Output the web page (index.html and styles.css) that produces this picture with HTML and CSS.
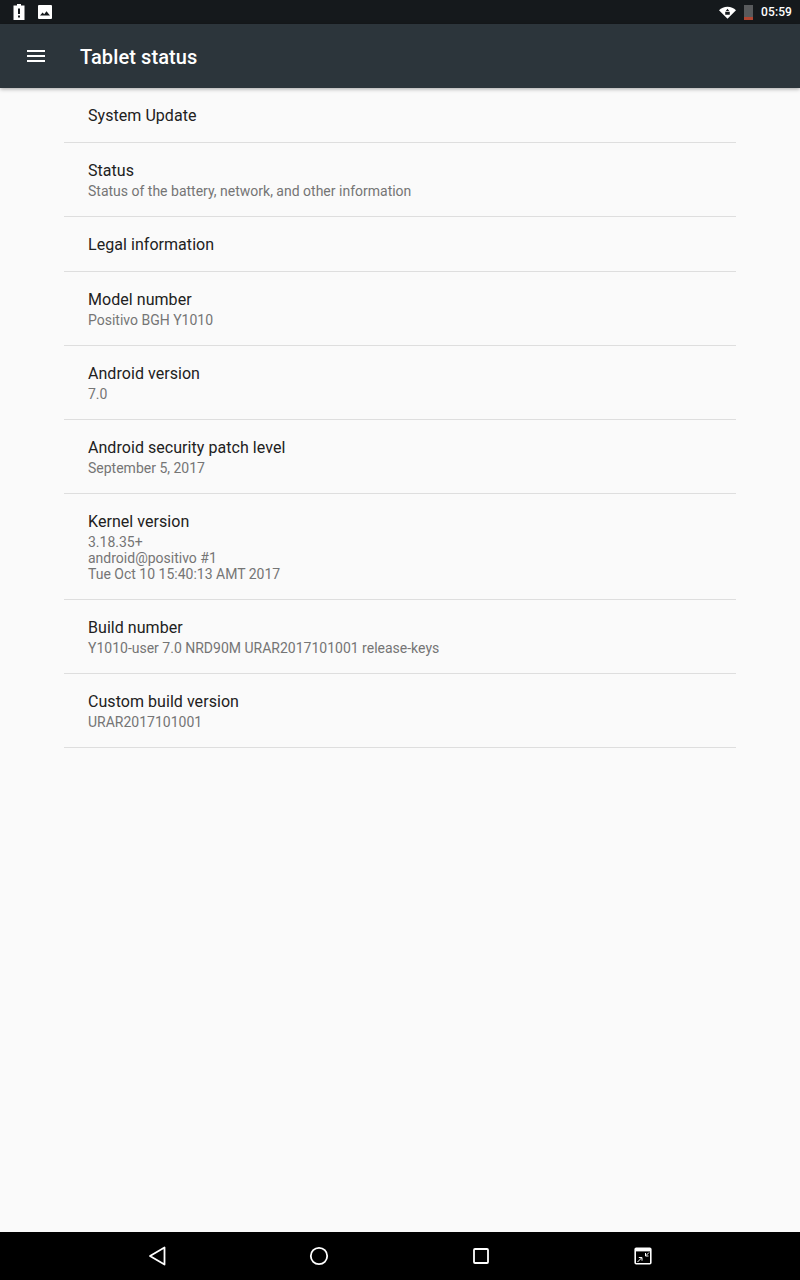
FILE: index.html
```html
<!DOCTYPE html>
<html>

<head>
    <meta charset="UTF-8">
    <meta name="viewport" content="width=device-width, initial-scale=1.0">
    <title>Tablet status</title>
    <link rel="stylesheet" href="styles.css">
</head>

<body>
    <div class="status-bar">
        <div class="status-bar__icons">
            <svg width="14" height="16" viewBox="0 0 14 16">
                <path fill="#fff" d="M5 0h4v1.500h3.500V16h-11V1.500H5z" />
                <path fill="#15191c" d="M6 4.500h2v5.500H6zM6 11.500h2v2H6z" />
            </svg>
            <svg width="14" height="14" viewBox="0 0 14 14">
                <path fill="#fff" d="M1 0h12a1 1 0 0 1 1 1v12a1 1 0 0 1-1 1H1a1 1 0 0 1-1-1V1a1 1 0 0 1 1-1z" />
                <path fill="#15191c" d="M2 10.500l2.600-3 1.600 1.700 2.300-3 3.500 4.300z" />
            </svg>
        </div>
        <div class="status-bar__right">
            <svg width="17" height="13" viewBox="0 0 18 13">
                <path fill="#fff" d="M0 4C2.300 1.700 5.500.300 9 .300s6.700 1.400 9 3.700l-9 9z" />
                <path fill="#15191c" d="M9 2.500l1.800 2.400H7.200zM6.600 5.700h4.800v3.300H6.600z" />
            </svg>
            <div class="battery">
                <div class="battery__level"></div>
            </div>
            <span class="status-bar__time">05:59</span>
        </div>
    </div>

    <header class="toolbar">
        <div class="toolbar__menu">
            <span></span>
            <span></span>
            <span></span>
        </div>
        <h1 class="toolbar__title">Tablet status</h1>
    </header>

    <main class="content">
        <ul class="list">
            <li class="list__item">
                <div class="list__title">System Update</div>
            </li>
            <li class="list__item">
                <div class="list__title">Status</div>
                <div class="list__summary">Status of the battery, network, and other information</div>
            </li>
            <li class="list__item">
                <div class="list__title">Legal information</div>
            </li>
            <li class="list__item">
                <div class="list__title">Model number</div>
                <div class="list__summary">Positivo BGH Y1010</div>
            </li>
            <li class="list__item">
                <div class="list__title">Android version</div>
                <div class="list__summary">7.0</div>
            </li>
            <li class="list__item">
                <div class="list__title">Android security patch level</div>
                <div class="list__summary">September 5, 2017</div>
            </li>
            <li class="list__item">
                <div class="list__title">Kernel version</div>
                <div class="list__summary">3.18.35+<br>android@positivo #1<br>Tue Oct 10 15:40:13 AMT 2017</div>
            </li>
            <li class="list__item">
                <div class="list__title">Build number</div>
                <div class="list__summary">Y1010-user 7.0 NRD90M URAR2017101001 release-keys</div>
            </li>
            <li class="list__item">
                <div class="list__title">Custom build version</div>
                <div class="list__summary">URAR2017101001</div>
            </li>
        </ul>
    </main>

    <nav class="nav-bar">
        <svg class="nav-bar__icon" width="24" height="24" viewBox="0 0 24 24">
            <path fill="none" stroke="#fff" stroke-width="1.800" stroke-linejoin="round" d="M19.500 3.500v17L5 12z" />
        </svg>
        <svg class="nav-bar__icon" width="24" height="24" viewBox="0 0 24 24">
            <circle cx="12" cy="12" r="8.200" fill="none" stroke="#fff" stroke-width="1.800" />
        </svg>
        <svg class="nav-bar__icon" width="24" height="24" viewBox="0 0 24 24">
            <rect x="5" y="5" width="14" height="14" rx="1" fill="none" stroke="#fff" stroke-width="1.800" />
        </svg>
        <svg class="nav-bar__icon" width="24" height="24" viewBox="0 0 24 24">
            <rect x="4.200" y="4.200" width="15.600" height="15.600" rx="1" fill="none" stroke="#fff" stroke-width="1.600" />
            <path fill="#fff" d="M4 4h16v3.400H4z" />
            <path fill="none" stroke="#fff" stroke-width="1" d="M6.500 18l4-4M7.800 13.500h3.200v3.200M18 8.500l-3 3M14.500 9v3h3" />
        </svg>
    </nav>
</body>

</html>
```

FILE: styles.css
```css
*,
*::before,
*::after {
    box-sizing: border-box;
    margin: 0;
    padding: 0;
}

body {
    display: flex;
    flex-direction: column;
    height: 100vh;
    font-family: Roboto, "Noto Sans", sans-serif;
    background-color: rgb(250, 250, 250);
    overflow: hidden;
}

.status-bar {
    display: flex;
    justify-content: space-between;
    align-items: center;
    height: 24px;
    padding: 0 8px 0 12px;
    background-color: rgb(21, 25, 28);
    color: white;
}

.status-bar__icons {
    display: flex;
    align-items: center;
    gap: 12px;
}

.status-bar__right {
    display: flex;
    align-items: center;
}

.status-bar__time {
    margin-left: 8px;
    font-size: 12px;
    font-weight: 500;
    letter-spacing: 0.1px;
}

.battery {
    display: flex;
    align-items: flex-end;
    width: 9px;
    height: 15px;
    margin-left: 8px;
    background-color: rgb(88, 90, 92);
}

.battery__level {
    width: 100%;
    height: 3px;
    background-color: rgb(176, 70, 50);
}

.toolbar {
    display: flex;
    align-items: center;
    height: 64px;
    padding-left: 27px;
    background-color: rgb(44, 53, 59);
    box-shadow: 0 1px 4px rgba(0, 0, 0, 0.35);
    color: white;
    position: relative;
}

.toolbar__menu {
    display: flex;
    flex-direction: column;
    gap: 3px;
    width: 18px;
    margin-right: 35px;
}

.toolbar__menu span {
    height: 2px;
    background-color: white;
}

.toolbar__title {
    padding-top: 2px;
    font-size: 20px;
    font-weight: 500;
    letter-spacing: 0.1px;
}

.content {
    flex: 1;
    padding: 0 64px;
}

.list {
    list-style: none;
}

.list__item {
    padding: 16px 24px 15px;
    border-bottom: 1px solid rgb(222, 222, 222);
}

.list__title {
    font-size: 16px;
    line-height: 23px;
    letter-spacing: 0.05px;
    color: rgb(33, 33, 33);
}

.list__summary {
    font-size: 14px;
    line-height: 16px;
    margin-top: 1px;
    padding-bottom: 2px;
    color: rgb(117, 117, 117);
}

.nav-bar {
    display: flex;
    justify-content: center;
    align-items: center;
    gap: 138px;
    height: 48px;
    background-color: black;
}
```
